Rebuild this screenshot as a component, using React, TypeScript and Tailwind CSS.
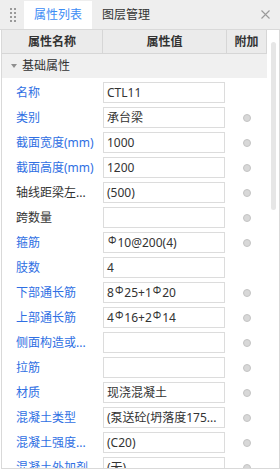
import React from "react";

const FONT = '"Noto Sans", "Noto Sans CJK SC", sans-serif';

type Row = { label: string; blue: boolean; value: React.ReactNode; dot: boolean };

const G = () => <span className="text-[10px] relative -top-[3px] mx-[1px]">Φ</span>;

const rows: Row[] = [
  { label: "名称", blue: true, value: "CTL11", dot: false },
  { label: "类别", blue: true, value: "承台梁", dot: true },
  { label: "截面宽度(mm)", blue: true, value: "1000", dot: true },
  { label: "截面高度(mm)", blue: true, value: "1200", dot: true },
  { label: "轴线距梁左...", blue: false, value: "(500)", dot: true },
  { label: "跨数量", blue: false, value: "", dot: true },
  { label: "箍筋", blue: true, value: <><G />10@200(4)</>, dot: true },
  { label: "肢数", blue: true, value: "4", dot: false },
  { label: "下部通长筋", blue: true, value: <>8<G />25+1<G />20</>, dot: true },
  { label: "上部通长筋", blue: true, value: <>4<G />16+2<G />14</>, dot: true },
  { label: "侧面构造或...", blue: true, value: "", dot: true },
  { label: "拉筋", blue: true, value: "", dot: true },
  { label: "材质", blue: true, value: "现浇混凝土", dot: true },
  { label: "混凝土类型", blue: true, value: "(泵送砼(坍落度175...", dot: true },
  { label: "混凝土强度...", blue: true, value: "(C20)", dot: true },
  { label: "混凝土外加剂", blue: true, value: "(无)", dot: true },
];

export default function App() {
  return (
    <div
      className="w-[280px] h-[469px] bg-white flex flex-col overflow-hidden text-[12px] text-[#333]"
      style={{ fontFamily: FONT }}
    >
      {/* tab bar */}
      <div className="h-[30px] shrink-0 bg-[#eeeeee] flex items-stretch border-b border-[#d9d9d9]">
        <div className="w-[24px] flex items-center justify-center">
          <div className="grid grid-cols-2 gap-x-[2px] gap-y-[2px] ml-[1px]">
            {Array.from({ length: 8 }).map((_, i) => (
              <span key={i} className="w-[2px] h-[2px] bg-[#9a9a9a]" />
            ))}
          </div>
        </div>
        <div className="mt-px w-[68px] bg-white flex items-center justify-center text-[12px] text-[#3c8cf5] leading-none">
          属性列表
        </div>
        <div className="w-[68px] flex items-center justify-center text-[12px] text-[#333] leading-none">
          图层管理
        </div>
        <div className="flex-1" />
        <div className="w-[30px] flex items-center justify-center">
          <svg width="9" height="9" viewBox="0 0 9 9">
            <path d="M0.5 0.5L8.5 8.5M8.5 0.5L0.5 8.5" stroke="#9a9a9a" strokeWidth="1.1" />
          </svg>
        </div>
      </div>

      {/* body */}
      <div className="flex-1 flex ml-px border-l border-r border-b border-[#d9d9d9] overflow-hidden min-h-0">
        <div className="w-[265px] flex flex-col shrink-0">
          {/* header */}
          <div className="h-[24px] shrink-0 flex bg-[#ebebeb] border-b border-[#d6d6d6] font-bold leading-none">
            <div className="w-[101px] flex items-center justify-center border-r border-[#d6d6d6]">属性名称</div>
            <div className="w-[124px] flex items-center justify-center border-r border-[#d6d6d6]">属性值</div>
            <div className="flex-1 flex items-center justify-center border-r border-[#d6d6d6]">附加</div>
          </div>
          {/* group */}
          <div className="h-[24px] shrink-0 flex items-center bg-[#f0f0f0] leading-none">
            <span className="ml-[9px] w-[11px] flex items-center">
              <svg width="6" height="4" viewBox="0 0 6 4">
                <path d="M0 0H6L3 4Z" fill="#8f8f8f" />
              </svg>
            </span>
            <span className="text-[12px] text-[#333]">基础属性</span>
          </div>
          {rows.map((r, i) => (
            <div key={i} className="h-[25px] shrink-0 flex items-end">
              <div
                className={`w-[101px] h-[21px] flex items-center pl-[14px] whitespace-nowrap leading-none ${
                  r.blue ? "text-[#2f6fe3]" : "text-[#333]"
                }`}
              >
                {r.label}
              </div>
              <div className="w-[122px] h-[21px] border border-[#dcdcdc] flex items-center pl-[3px] whitespace-nowrap overflow-hidden leading-none text-[#333]">
                {r.value}
              </div>
              <div className="flex-1 h-[21px] flex items-center justify-center pl-[2px]">
                {r.dot && (
                  <span className="w-[8px] h-[8px] rounded-full bg-[#d8d8d8] border border-[#c4c4c4]" />
                )}
              </div>
            </div>
          ))}
        </div>
        {/* scrollbar */}
        <div className="flex-1 flex justify-center pt-[12px]">
          <div className="w-[5px] h-[168px] rounded-full bg-[#e6e6e6]" />
        </div>
      </div>
    </div>
  );
}
